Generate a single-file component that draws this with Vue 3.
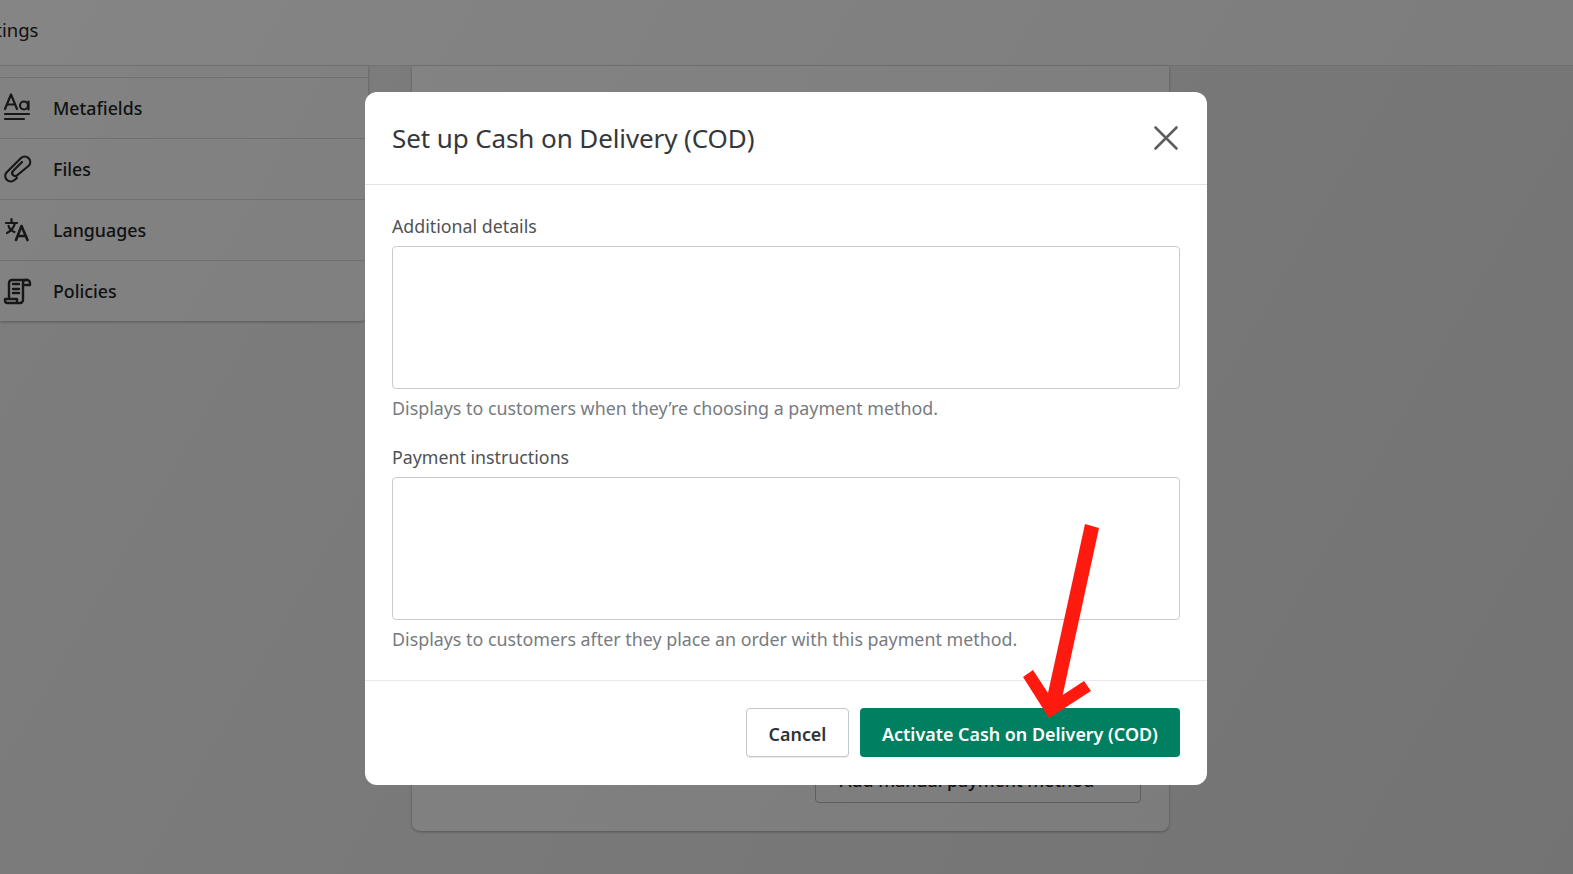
<script setup>
const menu = [
  { name: 'Metafields', icon: 'meta' },
  { name: 'Files', icon: 'files' },
  { name: 'Languages', icon: 'lang' },
  { name: 'Policies', icon: 'policy' }
]
</script>

<template>
  <div class="page">
    <header class="topbar"><span class="crumb">Settings</span></header>
    <div class="main">
      <aside class="sidebar">
        <div class="stub"></div>
        <div v-for="item in menu" :key="item.name" class="row">
          <svg class="ico" width="30" height="30" viewBox="0 0 30 30" fill="none" stroke="#2b2b2b" stroke-width="2.2" stroke-linecap="round" stroke-linejoin="round">
            <template v-if="item.icon === 'meta'">
              <path d="M2 16 8 1.500 14 16M4 11.500h8" />
              <circle cx="21" cy="12.500" r="4" />
              <path d="M25.500 8.500V16.500M2 21H26M2 26H21" />
            </template>
            <template v-else-if="item.icon === 'files'">
              <path d="M14 24l-2.500 2a5.500 5.500 0 0 1-8-7.500L18 4a5.500 5.500 0 0 1 8 7.500L14.500 21a3 3 0 0 1-4.500-4L19 8" />
            </template>
            <template v-else-if="item.icon === 'lang'">
              <path d="M3 8H14M8.500 4V8M12 8C11 12 8 16 4 18M5.500 11C6.500 14 8.500 16 11.500 17" />
              <path d="M13 25 18.500 11 24.500 25M15 21H23" stroke-width="2.600" />
            </template>
            <template v-else>
              <path d="M6 23V7a3 3 0 0 1 3-3h15a3 3 0 0 0-4 3v17a3 3 0 0 1-3 3H4.500A2.500 2.500 0 0 1 2 24.500V23h12v2" stroke-width="2.400" />
              <path d="M24 4a3 3 0 0 1 3 3v2h-7M10 8h6M10 13h6M10 17h6" stroke-width="2.400" />
            </template>
          </svg>
          <span class="row-name">{{ item.name }}</span>
        </div>
      </aside>
      <section class="card">
        <div class="card-foot">
          <button class="ghost">Add manual payment method</button>
        </div>
      </section>
    </div>

    <div class="overlay"></div>

    <div class="modal">
      <div class="modal-head">
        <h2>Set up Cash on Delivery (COD)</h2>
        <svg width="26" height="26" viewBox="0 0 26 26" fill="none" stroke="#5c5f62" stroke-width="2.600" stroke-linecap="round">
          <path d="M2.500 2.500 23.500 23.500M23.500 2.500 2.500 23.500" />
        </svg>
      </div>
      <div class="modal-body">
        <div class="field">
          <label>Additional details</label>
          <div class="area"></div>
          <p>Displays to customers when they’re choosing a payment method.</p>
        </div>
        <div class="field">
          <label>Payment instructions</label>
          <div class="area"></div>
          <p>Displays to customers after they place an order with this payment method.</p>
        </div>
      </div>
      <div class="modal-foot">
        <button class="cancel">Cancel</button>
        <button class="activate">Activate Cash on Delivery (COD)</button>
      </div>
    </div>

    <svg class="arrow" width="1573" height="874" viewBox="0 0 1573 874">
      <path d="M1085 524 1099 528 1062.700 695 1084 681 1091 691 1049 718 1023 677 1033 670 1048 693Z" fill="#ff1a10" />
    </svg>
  </div>
</template>

<style>
html, body {
  margin: 0;
  overflow: hidden;
}
</style>

<style scoped>
.page {
  position: relative;
  width: 1573px;
  height: 874px;
  overflow: hidden;
  background: #f1f1f1;
  font-family: "Noto Sans", "Open Sans", sans-serif;
  color: #202223;
}
.topbar {
  height: 66px;
  background: #fff;
  border-bottom: 1px solid #e1e1e1;
  box-sizing: border-box;
  display: flex;
  align-items: center;
  padding-bottom: 7px;
}
.crumb {
  font-size: 18.500px;
  margin-left: -32px;
}
.main {
  display: flex;
  gap: 44px;
  align-items: flex-start;
}
.sidebar {
  width: 368px;
  background: #fafafa;
  border-radius: 0 0 8px 0;
  box-shadow: 0 1px 3px rgba(0, 0, 0, 0.3);
  flex: none;
}
.stub {
  height: 11px;
  border-bottom: 1px solid #d8d8d8;
}
.row {
  height: 60px;
  display: flex;
  align-items: center;
  padding-left: 3px;
  border-bottom: 1px solid #d8d8d8;
}
.row:last-child {
  border-bottom: none;
}
.ico {
  flex: none;
}
.row-name {
  margin-left: 20px;
  font-size: 17.800px;
  font-weight: 500;
}
.card {
  width: 757px;
  height: 765px;
  background: #fff;
  border-radius: 0 0 8px 8px;
  box-shadow: 0 1px 3px rgba(0, 0, 0, 0.3);
  display: flex;
  flex-direction: column;
  justify-content: flex-end;
}
.card-foot {
  display: flex;
  justify-content: flex-end;
  padding: 0 28px 28px 0;
}
.ghost {
  width: 326px;
  height: 60px;
  background: #fff;
  border: 1px solid #babfc3;
  border-radius: 4px;
  font: 500 17.800px "Noto Sans", sans-serif;
  color: #202223;
  padding: 14px 22px 0 0;
}
.overlay {
  position: absolute;
  inset: 0;
  background: linear-gradient(120deg, rgba(0, 0, 0, 0.48), rgba(0, 0, 0, 0.52));
}
.modal {
  position: absolute;
  left: 365px;
  top: 92px;
  width: 842px;
  height: 693px;
  background: #fff;
  border-radius: 12px;
  display: flex;
  flex-direction: column;
}
.modal-head {
  height: 93px;
  box-sizing: border-box;
  border-bottom: 1px solid #e1e3e5;
  padding: 0 28px 0 27px;
  display: flex;
  align-items: center;
  justify-content: space-between;
}
.modal-head h2 {
  margin: 0;
  font-size: 26px;
  font-weight: 400;
  letter-spacing: -0.1px;
  color: #35383b;
}
.modal-body {
  flex: 1;
  padding: 28px 27px 0;
  display: flex;
  flex-direction: column;
  gap: 23px;
}
.field label {
  display: block;
  font-size: 17.800px;
  line-height: 26px;
  color: #4f5255;
}
.area {
  height: 141px;
  margin-top: 7px;
  border: 1px solid #c9cccf;
  border-radius: 4px;
}
.field p {
  margin: 6px 0 0;
  font-size: 17.850px;
  line-height: 26px;
  color: #777b7f;
}
.modal-foot {
  height: 105px;
  box-sizing: border-box;
  border-top: 1px solid #e8e9eb;
  padding: 27px 27px 0;
  display: flex;
  justify-content: flex-end;
  align-items: flex-start;
  gap: 11px;
}
.modal-foot button {
  height: 49px;
  border-radius: 4px;
  font-family: inherit;
  font-size: 17.900px;
  font-weight: 600;
  padding: 3px 0 0;
}
.cancel {
  width: 103px;
  background: #fff;
  border: 1px solid #c4c7ca;
  color: #303336;
  box-shadow: 0 1px 0 rgba(0, 0, 0, 0.08);
}
.activate {
  width: 320px;
  background: #008060;
  border: none;
  color: #fff;
}
.arrow {
  position: absolute;
  left: 0;
  top: 0;
  pointer-events: none;
}
</style>
